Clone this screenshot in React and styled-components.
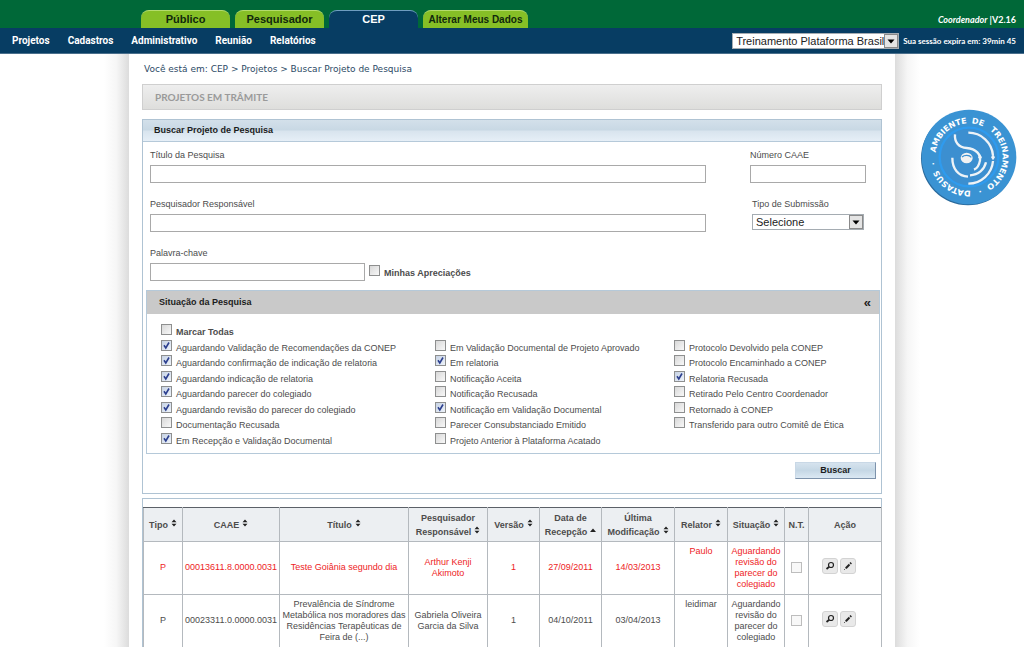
import styled, { createGlobalStyle, css } from "styled-components";

const GlobalStyle = createGlobalStyle`
  * {
    box-sizing: border-box;
  }

  body {
    margin: 0;
    background: #ffffff;
    color: #4c4c4c;
    font-family: "Liberation Sans", Arial, sans-serif;
    font-size: 9px;
    line-height: 12px;
  }

  input, select, button {
    font-family: inherit;
    color: inherit;
  }
`;

const svgUrl = (svg) => `url("data:image/svg+xml,${encodeURIComponent(svg)}")`;

const arrowImage = svgUrl(
  `<svg xmlns="http://www.w3.org/2000/svg" width="14" height="14">
    <rect x="0.5" y="0.5" width="13" height="13" fill="#e4e4e4" stroke="#8a8a8a"/>
    <path d="M3.500 5.500h7l-3.500 4z" fill="#000"/>
  </svg>`
);

const tickImage = svgUrl(
  `<svg xmlns="http://www.w3.org/2000/svg" width="9" height="9">
    <path d="M2 4.200L3.800 7L7 1.500" fill="none" stroke="#2c3f8f" stroke-width="1.600"/>
  </svg>`
);

/* ---------- Cabecera ---------- */

const Header = styled.header`
  display: grid;
  grid-template-columns: 1fr minmax(0, 766px) 1fr;
  height: 28px;
  background: #006838;
`;

const Tabs = styled.nav`
  grid-column: 2;
  display: flex;
  align-items: flex-end;
  gap: 5px;
  padding-left: 12px;
`;

const Tab = styled.a`
  width: ${(props) => (props.$wide ? "105px" : "89px")};
  height: 18px;
  border-radius: 8px 8px 0 0;
  border-top: 1px solid #b4dc6c;
  background: #86bf26;
  color: #10280c;
  font-size: ${(props) => (props.$wide ? "10px" : "11px")};
  font-weight: bold;
  line-height: 17px;
  text-align: center;
  text-decoration: none;

  ${(props) =>
    props.$active &&
    css`
      border-top-color: #6f9dc0;
      background: #073d63;
      color: #ffffff;
    `}
`;

const Version = styled.div`
  padding: 14px 8px 0 0;
  color: #ffffff;
  font-family: Lato, sans-serif;
  font-size: 9px;
  font-weight: bold;
  text-align: right;
  white-space: nowrap;
`;

const MenuBar = styled.div`
  display: flex;
  align-items: center;
  justify-content: space-between;
  height: 26px;
  padding: 0 8px 0 12px;
  border-bottom: 1px solid #4a6f8c;
  background: #073d63;
  color: #ffffff;
`;

const Menu = styled.nav`
  display: flex;
  gap: 18px;
`;

const MenuLink = styled.a`
  color: #ffffff;
  font-family: Roboto, sans-serif;
  font-size: 10px;
  font-weight: bold;
  text-decoration: none;
`;

const Session = styled.div`
  display: flex;
  align-items: center;
  gap: 4px;
  font-family: Lato, sans-serif;
  font-size: 8px;
  font-weight: bold;
  white-space: nowrap;
`;

const Select = styled.select`
  appearance: none;
  width: ${(props) => props.$width};
  height: 16px;
  padding: 0 13px 0 3px;
  border: 1px solid #a5acb2;
  border-radius: 0;
  background: #ffffff ${arrowImage} no-repeat right center;
  color: #222222;
  font-family: "Liberation Sans", Arial, sans-serif;
  font-size: 11px;
  line-height: 14px;
`;

/* ---------- Cuerpo ---------- */

const Body = styled.div`
  display: grid;
  grid-template-columns: 1fr 25px minmax(0, 766px) 25px 1fr;
  min-height: calc(100vh - 54px);
`;

const Shade = styled.div`
  background: linear-gradient(${(props) => props.$to}, #ffffff, #f6f6f6 50%, #dcdcdc);
`;

const Content = styled.main`
  padding: 9px 13px 0;
`;

const Aside = styled.aside`
  padding-top: 55px;
`;

const Breadcrumb = styled.div`
  padding-left: 2px;
  color: #2c4a66;
  font-family: "DejaVu Sans", Verdana, sans-serif;
`;

const PageTitle = styled.h1`
  height: 26px;
  margin: 9px 0 9px;
  padding-left: 12px;
  border: 1px solid #cfcfcf;
  background: linear-gradient(#eeeeee, #dededc);
  color: #9a9a9a;
  font-family: Lato, sans-serif;
  font-size: 10px;
  line-height: 24px;
`;

const Panel = styled.section`
  border: 1px solid #afc3d3;
`;

const PanelTitle = styled.h2`
  height: 22px;
  margin: 0;
  padding-left: 11px;
  border-bottom: 1px solid #b5c9d9;
  background: linear-gradient(#d3e0ea 0, #c8d8e4 48%, #d8e4ee 52%, #e6eff7);
  color: #1c1c1c;
  font-size: 9px;
  line-height: 20px;
`;

const Fields = styled.div`
  display: grid;
  grid-template-columns: minmax(0, 1fr) 116px;
  gap: 15px 44px;
  padding: 7px 15px 9px 7px;
`;

const Field = styled.div`
  display: flex;
  flex-direction: column;
  align-items: flex-start;
  gap: 4px;
  padding-left: ${(props) => (props.$indent ? "2px" : "0")};
`;

const TextInput = styled.input`
  width: ${(props) => props.$width || "100%"};
  height: 18px;
  border: 1px solid #a9a9a9;
  background: #ffffff;
`;

const Inline = styled.div`
  display: flex;
  align-items: flex-end;
  gap: 4px;
`;

const CheckLabel = styled.label`
  display: flex;
  align-items: flex-start;
  gap: 4px;
  line-height: 16px;
  font-weight: ${(props) => (props.$bold ? "bold" : "normal")};
  white-space: nowrap;
`;

const Checkbox = styled.input`
  appearance: none;
  flex: none;
  width: 11px;
  height: 11px;
  margin: 0;
  border: 1px solid ${(props) => (props.$light ? "#bdbdbd" : "#8e8f8f")};
  background: linear-gradient(135deg, #d8d8d8, #f8f8f8);

  ${(props) =>
    props.$light &&
    css`
      background: #f8f8f8;
    `}

  &:checked {
    background: ${tickImage} center no-repeat, linear-gradient(135deg, #c6d2e4, #eef3fa);
  }
`;

const Group = styled.section`
  margin: 0 1px 8px 3px;
  border: 1px solid #b5c9d9;
`;

const GroupTitle = styled.h3`
  display: flex;
  justify-content: space-between;
  height: 23px;
  margin: 0;
  padding: 0 8px 0 12px;
  background: #c9c9c9;
  color: #1c1c1c;
  font-size: 9px;
  line-height: 22px;
`;

const Toggle = styled.button`
  padding: 0;
  border: 0;
  background: none;
  font-size: 13px;
  font-weight: bold;
  line-height: 20px;
`;

const GroupBody = styled.div`
  padding: 10px 0 5px 14px;
`;

const Options = styled.div`
  display: grid;
  grid-template-columns: 274fr 239fr 205fr;
  grid-template-rows: repeat(3, 15px 16px) 15px;
  grid-auto-flow: column;
`;

const Actions = styled.div`
  display: flex;
  justify-content: flex-end;
  padding: 0 5px 14px;
`;

const SearchButton = styled.button`
  width: 81px;
  height: 17px;
  padding: 0;
  border: 1px solid;
  border-color: #c9d8e6 #7d92ab #7d92ab #c9d8e6;
  background: linear-gradient(#d6e3ee, #c5d7e5 50%, #dbe8f3);
  color: #1c1c1c;
  font-size: 9px;
  font-weight: bold;
  line-height: 15px;
`;

/* ---------- Tabela ---------- */

const Results = styled(Panel)`
  margin-top: 4px;
  padding-top: 8px;
  border-bottom: 0;
`;

const Table = styled.table`
  width: 100%;
  table-layout: fixed;
  border-collapse: collapse;
  border-top: 1px solid #5c6168;
  border-left: 1px solid #5c6168;
`;

const Th = styled.th`
  height: 34px;
  padding: 0;
  border: 1px solid #b4b9be;
  border-top-color: #5c6168;
  background: #eceff2;
  line-height: 14px;
`;

const Row = styled.tr`
  color: ${(props) => (props.$late ? "#ee1c25" : "#4c4c4c")};
`;

const Td = styled.td`
  height: 53px;
  padding: ${(props) => (props.$top ? "4px 0" : "0 0 1px")};
  border: 1px solid #b4b9be;
  line-height: 11px;
  text-align: center;
  vertical-align: ${(props) => (props.$top ? "top" : "middle")};
`;

const SortIcon = styled.svg`
  margin-left: 3px;
  vertical-align: 1px;
`;

const RowActions = styled.div`
  display: flex;
  justify-content: center;
  gap: 2px;
  padding: 0 12px 4px 0;
`;

const IconButton = styled.button`
  display: flex;
  align-items: center;
  justify-content: center;
  width: 16px;
  height: 16px;
  padding: 0;
  border: 1px solid #d3d3d3;
  border-radius: 3px;
  background: #e9e9e9;
`;

const Center = styled.div`
  display: flex;
  justify-content: center;
`;

const menu = ["Projetos", "Cadastros", "Administrativo", "Reunião", "Relatórios"];

const situations = [
  ["Aguardando Validação de Recomendações da CONEP", true],
  ["Aguardando confirmação de indicação de relatoria", true],
  ["Aguardando indicação de relatoria", true],
  ["Aguardando parecer do colegiado", true],
  ["Aguardando revisão do parecer do colegiado", true],
  ["Documentação Recusada", false],
  ["Em Recepção e Validação Documental", true],
  ["Em Validação Documental de Projeto Aprovado", false],
  ["Em relatoria", true],
  ["Notificação Aceita", false],
  ["Notificação Recusada", false],
  ["Notificação em Validação Documental", true],
  ["Parecer Consubstanciado Emitido", false],
  ["Projeto Anterior à Plataforma Acatado", false],
  ["Protocolo Devolvido pela CONEP", false],
  ["Protocolo Encaminhado a CONEP", false],
  ["Relatoria Recusada", true],
  ["Retirado Pelo Centro Coordenador", false],
  ["Retornado à CONEP", false],
  ["Transferido para outro Comitê de Ética", false],
];

const columns = [
  { title: "Tipo", width: 39, sort: "both" },
  { title: "CAAE", width: 97, sort: "both" },
  { title: "Título", width: 129, sort: "both" },
  { title: "Pesquisador Responsável", width: 79, sort: "both" },
  { title: "Versão", width: 52, sort: "both" },
  { title: "Data de Recepção", width: 62, sort: "up" },
  { title: "Última Modificação", width: 73, sort: "both" },
  { title: "Relator", width: 53, sort: "both" },
  { title: "Situação", width: 57, sort: "both" },
  { title: "N.T.", width: 24 },
  { title: "Ação", width: 73 },
];

const projects = [
  {
    caae: "00013611.8.0000.0031",
    title: "Teste Goiânia segundo dia",
    researcher: "Arthur Kenji Akimoto",
    received: "27/09/2011",
    modified: "14/03/2013",
    reporter: "Paulo",
    late: true,
  },
  {
    caae: "00023311.0.0000.0031",
    title: "Prevalência de Síndrome Metabólica nos moradores das Residências Terapêuticas de Feira de (...)",
    researcher: "Gabriela Oliveira Garcia da Silva",
    received: "04/10/2011",
    modified: "03/04/2013",
    reporter: "leidimar",
    late: false,
  },
];

// palabras del sello y su centro sobre el anillo
const ringWords = [
  ["AMBIENTE", "13%"],
  ["DE", "29%"],
  ["TREINAMENTO", "51%"],
  ["·", "70%"],
  ["DATASUS", "84%"],
  ["·", "97%"],
];

const Sort = ({ type }) => (
  <SortIcon width="6" height="8" viewBox="0 0 6 8" aria-hidden="true">
    {type === "up" ? (
      <path d="M0 6L3 2.500L6 6z" fill="#222" />
    ) : (
      <path d="M0.500 3.300L3 0.500L5.500 3.300zM0.500 4.700L3 7.500L5.500 4.700z" fill="#222" />
    )}
  </SortIcon>
);

const Badge = () => (
  <svg width="97" height="97" viewBox="10 12 291 291" role="img" aria-label="Ambiente de Treinamento Datasus">
    <circle cx="154" cy="160" r="141" fill="#2a6a9c" />
    <circle cx="157" cy="156" r="142" fill="#3a93d3" />
    <circle cx="157" cy="156" r="88" fill="#3c8fd0" stroke="#2f9bee" strokeWidth="7" />
    <path id="ring" d="M56 156A101 101 0 0 1 258 156A101 101 0 0 1 56 156" fill="none" />
    <g fill="#ffffff" fontFamily="DejaVu Sans, sans-serif" fontWeight="bold" fontSize="24" textAnchor="middle">
      {ringWords.map(([word, offset]) => (
        <text key={offset}>
          <textPath href="#ring" startOffset={offset}>{word}</textPath>
        </text>
      ))}
    </g>
    <g fill="none" stroke="#eef3f7" strokeWidth="7">
      <path d="M155 83A74 74 0 0 1 229 152" />
      <path d="M229 168A74 74 0 0 1 155 236" />
      <path d="M115 88C113 110 125 128 150 129C180 131 192 150 190 166C187 183 182 190 172 194" />
      <path d="M107 158C107 192 125 213 154 215" />
      <path d="M208 172C203 194 185 210 160 211" />
    </g>
    <path d="M229 148L235 157L229 166L223 157zM190 148L196 157L190 166L184 157z" fill="#eef3f7" />
    <ellipse cx="150" cy="159" rx="18" ry="16" fill="#f2f2f2" />
    <path d="M136 156C144 149 158 150 164 157" fill="none" stroke="#3c8fd0" strokeWidth="4" />
  </svg>
);

const SearchIcon = () => (
  <svg width="10" height="10" viewBox="0 0 10 10" fill="none" stroke="#222" aria-hidden="true">
    <circle cx="6" cy="4" r="2.500" strokeWidth="1.200" />
    <path d="M4.200 5.800L1.500 8" strokeWidth="1.800" />
  </svg>
);

const PencilIcon = () => (
  <svg width="10" height="10" viewBox="0 0 10 10" fill="none" stroke="#222" aria-hidden="true">
    <path d="M2.800 7.200L6.500 3.500" strokeWidth="2" />
    <path d="M7.200 2.800L8.200 1.800" strokeWidth="2" />
    <path d="M1.300 8.700L2.200 7.800" />
  </svg>
);

const SearchForm = () => (
  <Panel>
    <PanelTitle>Buscar Projeto de Pesquisa</PanelTitle>
    <Fields>
      <Field>
        <label htmlFor="titulo">Título da Pesquisa</label>
        <TextInput id="titulo" />
      </Field>
      <Field>
        <label htmlFor="caae">Número CAAE</label>
        <TextInput id="caae" />
      </Field>
      <Field>
        <label htmlFor="pesquisador">Pesquisador Responsável</label>
        <TextInput id="pesquisador" />
      </Field>
      <Field $indent>
        <label htmlFor="tipo">Tipo de Submissão</label>
        <Select id="tipo" $width="112px">
          <option>Selecione</option>
        </Select>
      </Field>
      <Field>
        <label htmlFor="palavra">Palavra-chave</label>
        <Inline>
          <TextInput id="palavra" $width="215px" />
          <CheckLabel $bold>
            <Checkbox type="checkbox" />
            Minhas Apreciações
          </CheckLabel>
        </Inline>
      </Field>
    </Fields>
    <Group>
      <GroupTitle>
        Situação da Pesquisa
        <Toggle type="button" aria-label="Recolher">«</Toggle>
      </GroupTitle>
      <GroupBody>
        <CheckLabel $bold>
          <Checkbox type="checkbox" />
          Marcar Todas
        </CheckLabel>
        <Options>
          {situations.map(([name, checked]) => (
            <CheckLabel key={name}>
              <Checkbox type="checkbox" defaultChecked={checked} />
              {name}
            </CheckLabel>
          ))}
        </Options>
      </GroupBody>
    </Group>
    <Actions>
      <SearchButton type="button">Buscar</SearchButton>
    </Actions>
  </Panel>
);

const ResultsTable = () => (
  <Results>
    <Table>
      <colgroup>
        {columns.map((column) => (
          <col key={column.title} width={column.width} />
        ))}
      </colgroup>
      <thead>
        <tr>
          {columns.map((column) => (
            <Th key={column.title}>
              {column.title}
              {column.sort && <Sort type={column.sort} />}
            </Th>
          ))}
        </tr>
      </thead>
      <tbody>
        {projects.map((project) => (
          <Row key={project.caae} $late={project.late}>
            <Td>P</Td>
            <Td>{project.caae}</Td>
            <Td>{project.title}</Td>
            <Td>{project.researcher}</Td>
            <Td>1</Td>
            <Td>{project.received}</Td>
            <Td>{project.modified}</Td>
            <Td $top>{project.reporter}</Td>
            <Td>Aguardando revisão do parecer do colegiado</Td>
            <Td>
              <Center>
                <Checkbox type="checkbox" $light aria-label="N.T." />
              </Center>
            </Td>
            <Td>
              <RowActions>
                <IconButton type="button" aria-label="Detalhar">
                  <SearchIcon />
                </IconButton>
                <IconButton type="button" aria-label="Editar">
                  <PencilIcon />
                </IconButton>
              </RowActions>
            </Td>
          </Row>
        ))}
      </tbody>
    </Table>
  </Results>
);

const App = () => {
  return (
    <>
      <GlobalStyle />
      <Header>
        <Tabs>
          <Tab href="#publico">Público</Tab>
          <Tab href="#pesquisador">Pesquisador</Tab>
          <Tab href="#cep" $active>CEP</Tab>
          <Tab href="#dados" $wide>Alterar Meus Dados</Tab>
        </Tabs>
        <Version>
          <em>Coordenador</em> |V2.16
        </Version>
      </Header>
      <MenuBar>
        <Menu>
          {menu.map((item) => (
            <MenuLink key={item} href="#menu">{item}</MenuLink>
          ))}
        </Menu>
        <Session>
          <Select $width="167px" aria-label="Comitê">
            <option>Treinamento Plataforma Brasil</option>
          </Select>
          Sua sessão expira em: 39min 45
        </Session>
      </MenuBar>
      <Body>
        <div />
        <Shade $to="to right" />
        <Content>
          <Breadcrumb>Você está em: CEP &gt; Projetos &gt; Buscar Projeto de Pesquisa</Breadcrumb>
          <PageTitle>PROJETOS EM TRÂMITE</PageTitle>
          <SearchForm />
          <ResultsTable />
        </Content>
        <Shade $to="to left" />
        <Aside>
          <Badge />
        </Aside>
      </Body>
    </>
  );
};

export default App;
